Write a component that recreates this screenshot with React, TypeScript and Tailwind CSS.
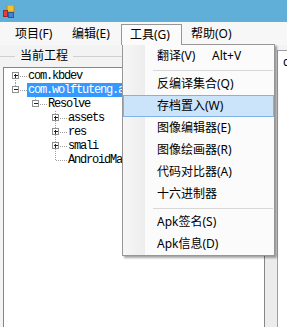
import React from 'react'

type TreeRow = {
  level: number
  label: string
  box?: '+' | '-'
  selected?: boolean
  // vertical guide per column: 'top' | 'bottom' | 'full' | 'none'
  guides: string[]
}

const rows: TreeRow[] = [
  { level: 0, label: 'com.kbdev', box: '+', guides: ['bottom'] },
  { level: 0, label: 'com.wolftuteng.apkeditor', box: '-', selected: true, guides: ['top'] },
  { level: 1, label: 'Resolve', box: '-', guides: ['none', 'top'] },
  { level: 2, label: 'assets', box: '+', guides: ['none', 'none', 'full'] },
  { level: 2, label: 'res', box: '+', guides: ['none', 'none', 'full'] },
  { level: 2, label: 'smali', box: '+', guides: ['none', 'none', 'full'] },
  { level: 2, label: 'AndroidManifest.xml', guides: ['none', 'none', 'top'] },
]

function AppIcon() {
  return (
    <svg width="12" height="13" viewBox="0 0 12 13">
      <rect x="4" y="0" width="7" height="7" fill="#f3c12c" stroke="#c98a12" strokeWidth="1" />
      <rect x="0.5" y="5.5" width="4" height="6" fill="#e0413c" stroke="#a52420" strokeWidth="1" />
      <rect x="5.5" y="7.5" width="5" height="5" fill="#4b7fd6" stroke="#2c569e" strokeWidth="1" />
    </svg>
  )
}

function Guides({ row }: { row: TreeRow }) {
  const w = 23 + 20 * row.level
  const own = 11 + 20 * row.level
  return (
    <svg width={w} height="14" className="shrink-0">
      {row.guides.map((g, i) => {
        const x = 11.5 + 20 * i
        if (g === 'full') return <line key={i} x1={x} y1="0" x2={x} y2="14" stroke="#a0a0a0" strokeDasharray="1 1" />
        if (g === 'top') return <line key={i} x1={x} y1="0" x2={x} y2="7" stroke="#a0a0a0" strokeDasharray="1 1" />
        if (g === 'bottom') return <line key={i} x1={x} y1="7" x2={x} y2="14" stroke="#a0a0a0" strokeDasharray="1 1" />
        return null
      })}
      <line x1={own + 1} y1="7.5" x2={w} y2="7.5" stroke="#a0a0a0" strokeDasharray="1 1" />
      {row.box && (
        <g>
          <rect x={own - 2.5} y="3.5" width="6" height="6" fill="#fff" stroke="#8f8f8f" />
          <line x1={own - 1} y1="6.5" x2={own + 3} y2="6.5" stroke="#222" />
          {row.box === '+' && <line x1={own + 0.5} y1="5" x2={own + 0.5} y2="9" stroke="#222" />}
        </g>
      )}
    </svg>
  )
}

function MenuItem({ label, shortcut, active }: { label: string; shortcut?: string; active?: boolean }) {
  return (
    <div
      className={`flex h-[22px] items-center pl-[33px] ${active ? 'bg-[#cce4f9] border border-[#7eb4ea]' : 'border border-transparent'}`}
    >
      <span className={`whitespace-nowrap ${shortcut ? 'w-[55px]' : ''}`}>{label}</span>
      {shortcut && <span className="whitespace-nowrap">{shortcut}</span>}
    </div>
  )
}

function Separator() {
  return (
    <div className="flex h-[6px] items-center pl-[30px] pr-[1px]">
      <div className="h-px flex-1 bg-[#d7d7d7]" />
    </div>
  )
}

export default function App() {
  return (
    <div className="relative h-[327px] w-[287px] overflow-hidden bg-[#f3f3f3] font-['Noto_Sans','Noto_Sans_CJK_SC',sans-serif] text-[12px] text-black">
      {/* title bar */}
      <div className="flex h-[22px] items-center bg-[#5fafd8] pl-[3px]">
        <AppIcon />
      </div>

      {/* menu bar */}
      <div className="flex h-[23px] items-stretch bg-[#f7f7f7] pl-[6px]">
        <div className="flex w-[57px] items-center pl-[9px]">项目(F)</div>
        <div className="flex w-[58px] items-center pl-[9px]">编辑(E)</div>
        <div className="relative z-20 mt-[2px] flex w-[61px] items-center border-x border-t border-[#979797] bg-[#fbfbfb] pb-[1px] pl-[8px]">
          工具(G)
        </div>
        <div className="flex items-center pl-[9px]">帮助(O)</div>
      </div>

      {/* body */}
      <div className="flex h-[282px]">
        <div className="flex w-[265px] flex-col pl-[3px]">
          <div className="flex h-[22px] items-center -ml-[3px]">
            <div className="h-px w-[15px] bg-[#cfcfcf]" />
            <span className="px-[5px]">当前工程</span>
            <div className="h-px flex-1 bg-[#cfcfcf]" />
          </div>
          <div className="flex-1 overflow-hidden border-x border-t border-[#868686] bg-white pt-[1px] font-['Liberation_Mono','DejaVu_Sans_Mono',monospace] text-[12px] tracking-[-1.2px]">
            {rows.map((row, i) => (
              <div key={i} className="flex h-[14px] items-center whitespace-nowrap">
                <Guides row={row} />
                <span
                  className={`px-[1px] leading-[14px] ${row.selected ? 'bg-[#3399ff] text-white' : ''}`}
                >
                  {row.label}
                </span>
              </div>
            ))}
          </div>
        </div>
        <div className="w-[12px] bg-[#ececec]" />
        <div className="mt-[5px] flex-1 overflow-hidden border-l border-t border-[#a0a0a0] bg-white pl-[5px] pt-[2px]">
          c
        </div>
      </div>

      {/* open dropdown of 工具 */}
      <div className="absolute left-[122px] top-[44px] z-10 w-[153px] border-x border-b border-[#979797] bg-[#fbfbfb] shadow-[2px_2px_2px_rgba(0,0,0,0.35)]">
        <div className="flex h-px">
          <div className="w-[59px]" />
          <div className="flex-1 bg-[#979797]" />
        </div>
        <div className="relative">
          <div className="absolute left-0 top-0 h-full w-[22px] bg-gradient-to-r from-[#f6f6f6] to-[#ededed]" />
          <div className="relative">
            <MenuItem label="翻译(V)" shortcut="Alt+V" />
            <Separator />
            <MenuItem label="反编译集合(Q)" />
            <MenuItem label="存档置入(W)" active />
            <MenuItem label="图像编辑器(E)" />
            <MenuItem label="图像绘画器(R)" />
            <MenuItem label="代码对比器(A)" />
            <MenuItem label="十六进制器" />
            <Separator />
            <MenuItem label="Apk签名(S)" />
            <MenuItem label="Apk信息(D)" />
          </div>
        </div>
      </div>
    </div>
  )
}
